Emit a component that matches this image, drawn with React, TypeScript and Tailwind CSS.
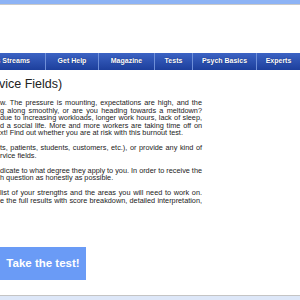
import React from 'react';

const navItems = [
  { label: 's Streams', width: 'w-[46px]', first: true },
  { label: 'Get Help', width: 'w-[53px]' },
  { label: 'Magazine', width: 'w-[56px]' },
  { label: 'Tests', width: 'w-[38px]' },
  { label: 'Psych Basics', width: 'w-[64px]' },
  { label: 'Experts', width: 'w-[43px]' },
];

// each paragraph is cut on the left, so lines are written as they show
const paragraphs = [
  [
    'w. The pressure is mounting, expectations are high, and the',
    'g along smoothly, or are you heading towards a meltdown?',
    'due to increasing workloads, longer work hours, lack of sleep,',
    'd a social life. More and more workers are taking time off on',
    'xt! Find out whether you are at risk with this burnout test.',
  ],
  [
    'ts, patients, students, customers, etc.), or provide any kind of',
    'rvice fields.',
  ],
  [
    'dicate to what degree they apply to you. In order to receive the',
    'h question as honestly as possible.',
  ],
  [
    'list of your strengths and the areas you will need to work on.',
    'e the full results with score breakdown, detailed interpretation,',
  ],
];

const App = () => {
  return (
    <div className="w-[300px] h-[300px] overflow-hidden bg-white flex flex-col font-['Liberation_Sans',Arial,sans-serif] text-[#222]">
      <div className="h-[5px] bg-[#8db3f5] border-b border-[#c9c9c9] shrink-0" />

      <nav className="mt-[48px] h-[17px] flex shrink-0 bg-gradient-to-b from-[#3c63c4] to-[#1d3f9c]">
        {navItems.map((item, i) => (
          <div
            key={item.label}
            className={`${item.width} h-full flex items-center overflow-hidden whitespace-nowrap text-[7px] font-bold text-white [text-shadow:0_0_1px_#0a1f60] ${
              item.first ? 'justify-end pr-[15px]' : 'justify-center'
            } ${i < navItems.length - 1 ? 'border-r border-[#6f8fd8]' : ''}`}
          >
            {item.label}
          </div>
        ))}
      </nav>

      <h1 className="mt-[7px] text-[12.5px] leading-[15px] whitespace-nowrap -ml-[1px]">vice Fields)</h1>

      <div className="mt-[7px] w-[202px] text-[7.3px] leading-[7.5px] flex flex-col gap-[7.5px]">
        {paragraphs.map((lines, p) => (
          <div key={p}>
            {lines.map((line, i) => (
              <div
                key={i}
                className={`whitespace-nowrap ${
                  i < lines.length - 1 || p === 3 ? 'text-justify [text-align-last:justify] whitespace-normal' : ''
                }`}
              >
                {line}
              </div>
            ))}
          </div>
        ))}
      </div>

      <div className="mt-[43px] w-[86px] h-[33px] bg-[#6a9bf6] flex items-center justify-center text-white font-bold text-[11.5px] whitespace-nowrap">
        Take the test!
      </div>

      <div className="mt-auto h-[5px] bg-[#dde7f8] border-t border-[#c4c4c4] shrink-0" />
    </div>
  );
};

export default App;
